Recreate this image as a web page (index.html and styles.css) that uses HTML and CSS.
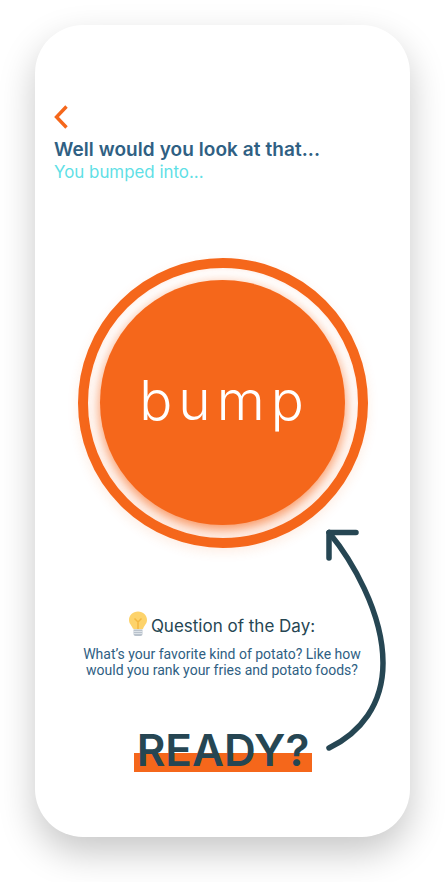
FILE: index.html
```html
<!DOCTYPE html>
<html lang="en">
<head>
    <meta charset="UTF-8">
    <meta name="viewport" content="width=device-width, initial-scale=1.0">
    <title>Bump</title>
    <link rel="stylesheet" href="styles.css">
</head>
<body>

    <div class="phone">
        <a class="back" href="#">
            <svg width="16" height="26" viewBox="0 0 16 26"><path d="M12.500 2.500 2.500 13l10 10.500" fill="none" stroke="#f5671b" stroke-width="3.400"/></svg>
        </a>
        <h2 class="title">Well would you look at that...</h2>
        <p class="subtitle">You bumped into...</p>

        <div class="ring">
            <div class="bump">bump</div>
        </div>

        <div class="question">
            <svg class="bulb" width="20" height="26" viewBox="0 0 20 26">
                <path d="M10 0.500C4.800 0.500 1 4.300 1 9c0 3.600 2.600 5.400 3.600 8 .3.800.6 1.200 1.400 1.200h8c.8 0 1.100-.4 1.400-1.200 1-2.600 3.600-4.400 3.600-8 0-4.700-3.800-8.500-9-8.500z" fill="#fdd36b"/>
                <path d="M6.500 7.500 10 11l3.500-3.500M10 11v7" fill="none" stroke="#f3b73f" stroke-width="1.500"/>
                <path d="M5.500 18.500h9v4.500a2 2 0 0 1-2 2h-5a2 2 0 0 1-2-2z" fill="#b9c2cc"/>
                <path d="M5.500 20.500h9M5.500 22.500h9" stroke="#e6ebef" stroke-width="0.800"/>
            </svg>
            <span>Question of the Day:</span>
        </div>
        <p class="prompt">What’s your favorite kind of potato? Like how would you rank your fries and potato foods?</p>

        <div class="ready"><span>READY?</span></div>

        <svg class="arrow" width="70" height="235" viewBox="0 0 70 235">
            <path d="M4 5.500C26 32 58 85 58 136C58 178 35 206 4 221" fill="none" stroke="#264653" stroke-width="5.500" stroke-linecap="round"/>
            <path d="M31 5.500H4V31" fill="none" stroke="#264653" stroke-width="5.500" stroke-linecap="round" stroke-linejoin="round"/>
        </svg>
    </div>

</body>
</html>
```

FILE: styles.css
```css
* {
    margin: 0;
    padding: 0;
    box-sizing: border-box;
}
body {
    width: 445px;
    height: 882px;
    overflow: hidden;
    background: #fff;
    padding: 25px 35px 0;
    font-family: "Inter", sans-serif;
}
.phone {
    position: relative;
    width: 375px;
    height: 812px;
    background: #fff;
    border-radius: 48px;
    padding: 79px 19px 0;
    box-shadow: 0 16px 36px rgba(0, 0, 0, 0.22);
}
.back {
    display: block;
    height: 26px;
}
.title {
    margin-top: 8px;
    font-size: 19px;
    font-weight: 600;
    letter-spacing: 0.07px;
    line-height: 24px;
    color: #2f6083;
}
.subtitle {
    font-size: 16.900px;
    line-height: 20px;
    color: #5fdfe6;
}
.ring {
    width: 290px;
    height: 290px;
    margin: 76px 0 0 24px;
    border: 10px solid #f5671b;
    border-radius: 50%;
    background: #fff;
    display: flex;
    align-items: center;
    justify-content: center;
    box-shadow: 0 4px 12px rgba(245, 103, 27, 0.12), inset 0 0 5px rgba(245, 103, 27, 0.15);
}
.bump {
    width: 245px;
    height: 245px;
    margin: -1px 0 0 -1px;
    border-radius: 50%;
    background: #f5671b;
    box-shadow: 0 5px 14px rgba(245, 103, 27, 0.75);
    color: #fff;
    font-size: 55px;
    font-weight: 300;
    letter-spacing: 6px;
    line-height: 240px;
    text-indent: 4px;
    text-align: center;
}
.question {
    margin-top: 63px;
    margin-left: -2px;
    display: flex;
    align-items: center;
    justify-content: center;
    gap: 3px;
    height: 26px;
    color: #264653;
    font-size: 17px;
}
.question span {
    margin-top: 3px;
}
.bulb {
    flex: none;
}
.prompt {
    width: 290px;
    margin: 9px 0 0 23px;
    font-family: "Roboto", sans-serif;
    font-size: 14px;
    line-height: 16px;
    text-align: center;
    color: #2f6083;
}
.ready {
    margin: 50px 0 0 80px;
    width: 178px;
    text-align: center;
}
.ready span {
    display: block;
    font-size: 44px;
    font-weight: 600;
    line-height: 44px;
    color: #264653;
    white-space: nowrap;
    background: linear-gradient(#f5671b, #f5671b) no-repeat 0 100% / 100% 19px;
}
.arrow {
    position: absolute;
    left: 290px;
    top: 502px;
}
```
